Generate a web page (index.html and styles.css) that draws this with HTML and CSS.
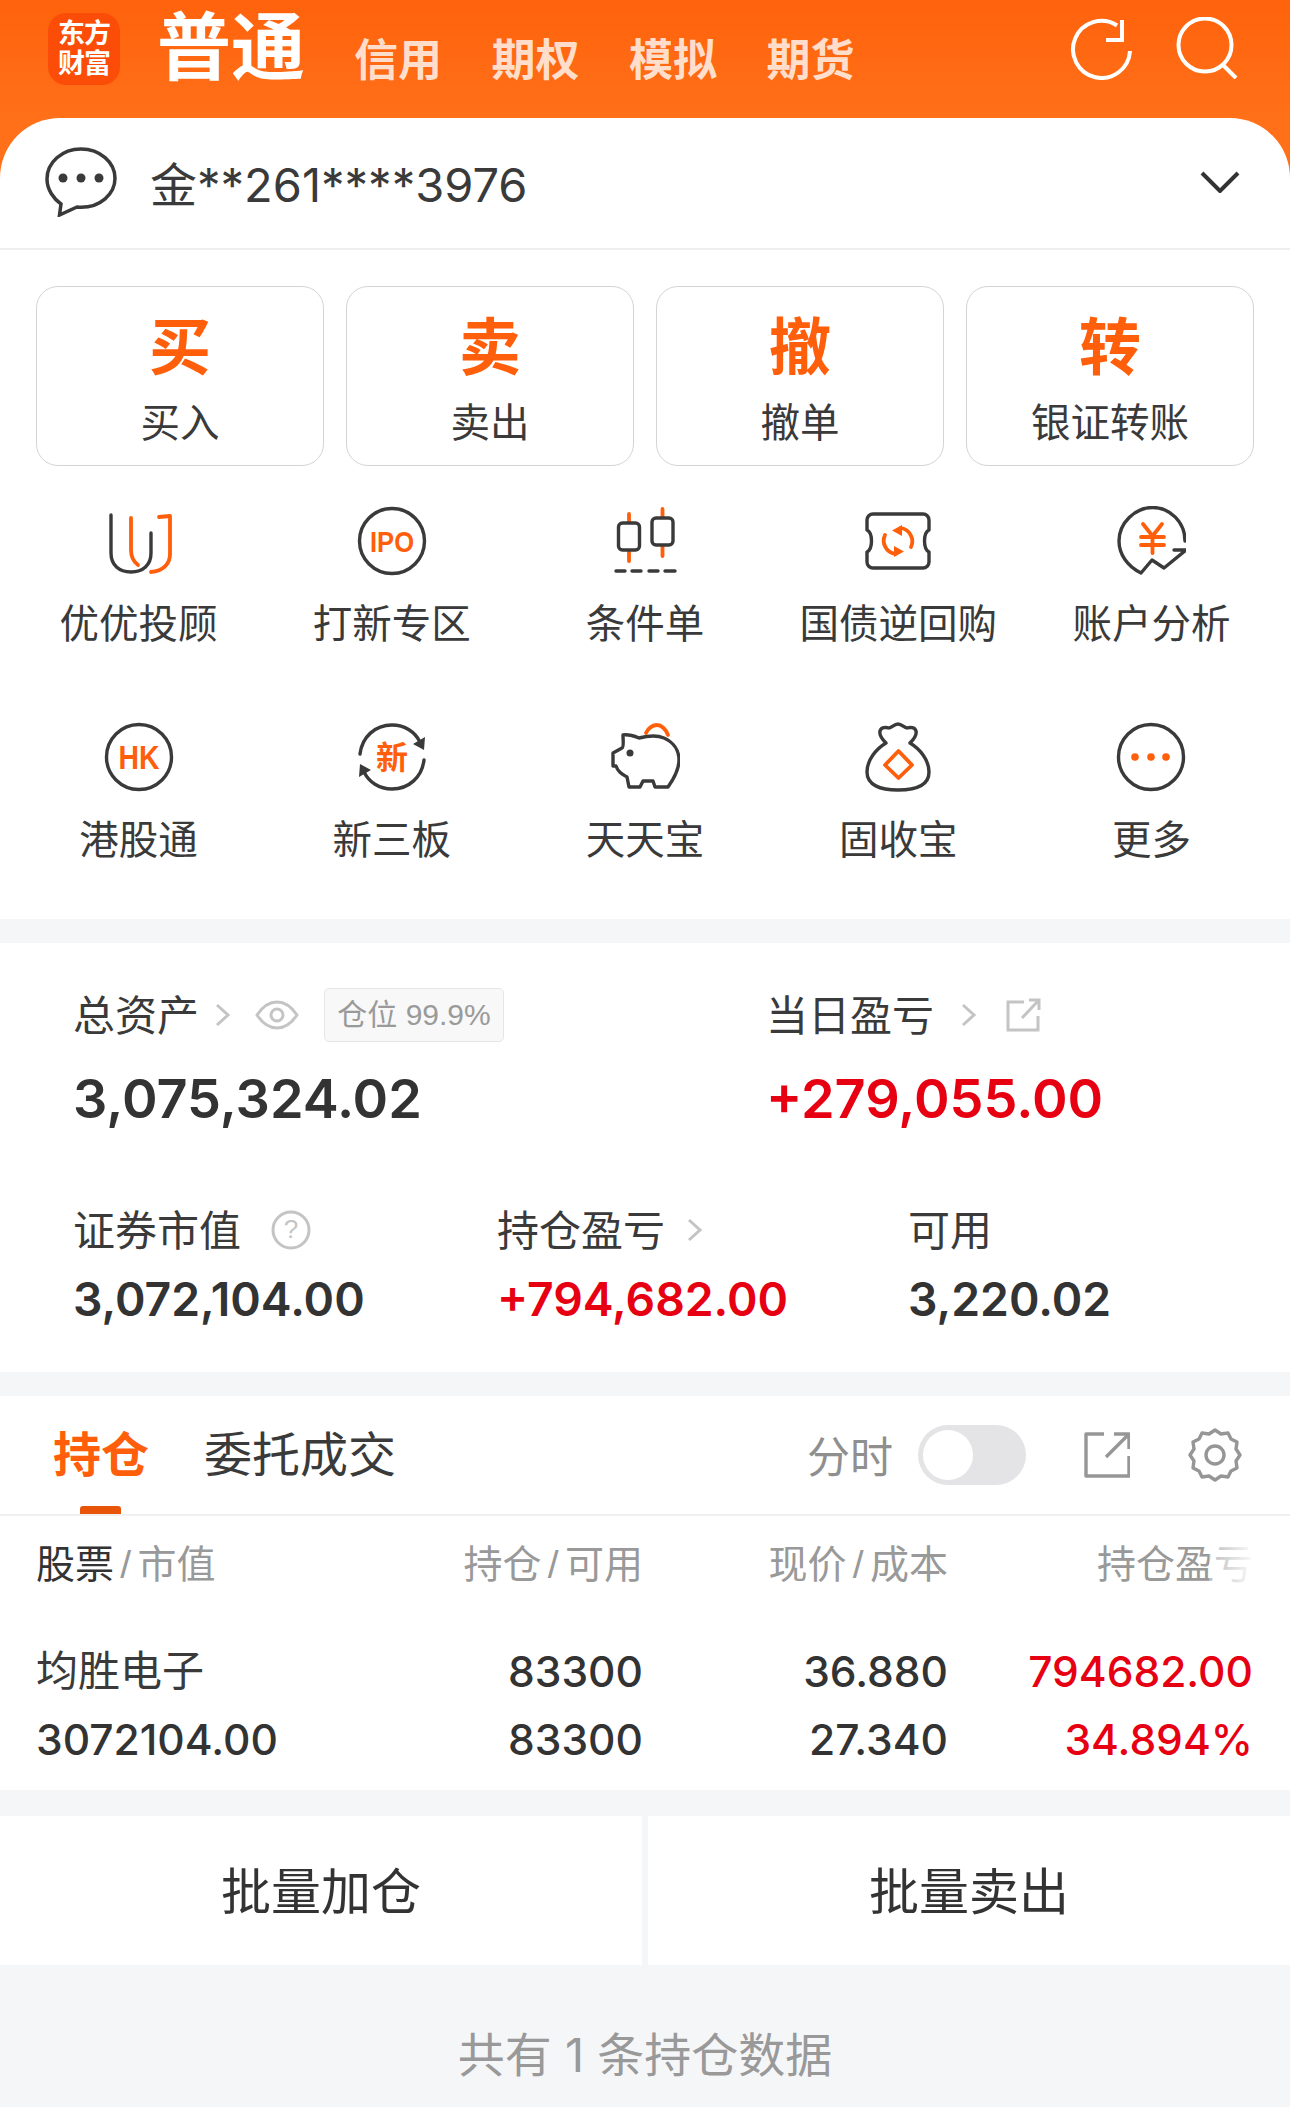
FILE: index.html
```html
<!DOCTYPE html>
<html lang="zh-CN">
<head>
<meta charset="utf-8">
<title>普通</title>
<link rel="stylesheet" href="styles.css">
</head>
<body>
<div class="top">
  <header class="header">
    <div class="logo"><span>东方</span><span>财富</span></div>
    <div class="title">普通</div>
    <nav class="nav"><span>信用</span><span>期权</span><span>模拟</span><span>期货</span></nav>
    <svg class="ic-refresh" viewBox="0 0 62 62"><path class="w" d="M60 33a28.500 28.500 0 1 1-13-25.500M52 2v20H36"/></svg>
    <svg class="ic-search" viewBox="0 0 62 62"><circle class="w" cx="29" cy="28" r="26.500"/><path class="w" d="M47 48l13 13"/></svg>
  </header>
  <div class="account">
    <svg class="ic-bubble" viewBox="0 0 72 70"><path class="bub" d="M36 2C17 2 2 15.500 2 32c0 11 7 20 14 25l-1.500 11L32 60c1.500.2 3 .3 4 .3 19 0 34-13 34-29S55 2 36 2z"/><circle class="dot" cx="18" cy="31" r="4.500"/><circle class="dot" cx="36" cy="31" r="4.500"/><circle class="dot" cx="54" cy="31" r="4.500"/></svg>
    <span class="acct-name">金**261****3976</span>
    <svg class="ic-chev" viewBox="0 0 40 22"><path class="chev" d="M2 2l18 18L38 2"/></svg>
  </div>
</div>

<section class="actions">
  <div class="act"><b>买</b><span>买入</span></div>
  <div class="act"><b>卖</b><span>卖出</span></div>
  <div class="act"><b>撤</b><span>撤单</span></div>
  <div class="act"><b>转</b><span>银证转账</span></div>
</section>

<section class="menu">
  <div class="item">
    <svg viewBox="0 0 70 70"><path class="d" d="M7 9v38c0 12 8 19 20 19s20-7 20-19V27"/><path class="o" d="M27 12v32c0 7 3 12 7 15"/><path class="o" d="M55 11l11-1v38c0 10-7 17-19 18"/></svg>
    <span>优优投顾</span>
  </div>
  <div class="item">
    <svg viewBox="0 0 70 70"><circle class="d" cx="35" cy="35" r="32.500"/><text class="ot ipo" x="35" y="46" textLength="44" lengthAdjust="spacingAndGlyphs">IPO</text></svg>
    <span>打新专区</span>
  </div>
  <div class="item">
    <svg viewBox="0 0 70 70"><path class="o" d="M19 8v47M52.500 3v47"/><rect class="dw" x="8.500" y="17" width="21" height="27" rx="4"/><rect class="dw" x="42" y="12" width="21" height="27" rx="4"/><path class="d" d="M6 65h9M22 65h9M39 65h9M55 65h10"/></svg>
    <span>条件单</span>
  </div>
  <div class="item">
    <svg viewBox="0 0 70 70"><path class="d" d="M10 8h50a6 6 0 0 1 6 6v10c-6 3-6 19 0 22v10a6 6 0 0 1-6 6H10a6 6 0 0 1-6-6V46c6-3 6-19 0-22V14a6 6 0 0 1 6-6z"/><path class="o" d="M38 22a13.500 13.500 0 0 1 10 19M32 48a13.500 13.500 0 0 1-10-19"/><path class="of" d="M39 19v11l-10-5.500zM31 40v11l10-5.500z"/></svg>
    <span>国债逆回购</span>
  </div>
  <div class="item">
    <svg viewBox="0 0 70 70"><path class="d" d="M69 35C69 16 54 1.500 36.500 1.500S3 17 3 35c0 13 8 25 22 32l11-13 12 8 22-18H58"/><path class="o" d="M27 18l9.500 12 9.500-12M25 31h23M25 39h23M36.500 30v17"/></svg>
    <span>账户分析</span>
  </div>
  <div class="item">
    <svg viewBox="0 0 70 70"><circle class="d" cx="35" cy="35" r="32.500"/><text class="ot hk" x="35" y="47" textLength="41" lengthAdjust="spacingAndGlyphs">HK</text></svg>
    <span>港股通</span>
  </div>
  <div class="item">
    <svg viewBox="0 0 70 70"><path class="d" d="M3 32C5 15 18 3 35 3c13 0 23 7 28 17M67 38c-2 17-15 29-32 29-13 0-23-7-28-17"/><path class="df" d="M68 15l-1 13-11-6zM2 55l1-13 11 6z"/><text class="ot xin" x="35" y="47">新</text></svg>
    <span>新三板</span>
  </div>
  <div class="item">
    <svg viewBox="0 0 70 70"><path class="d" d="M13 13c6-1 11 1 16 3 8-2 18-3 25 0 9 4 15 12 15 22 0 11-6 20-11 27H45l-2-6H33l-3 6H19l-2-10C12 52 8 50 6 44H3V31l9-5c2-1 1-8 1-13z"/><circle class="dot" cx="20" cy="31" r="3.500"/><path class="o" d="M36 11c2-5 7-8 11-8s9 4 11 10"/></svg>
    <span>天天宝</span>
  </div>
  <div class="item">
    <svg viewBox="0 0 70 70"><path class="d" d="M35 2c4 0 6 4 9 4 3-1 8-1 9 3 1 4-3 9-6 12 10 6 19 17 19 29 0 13-13 18-31 18S4 63 4 50c0-12 9-23 19-29-3-3-7-8-6-12 1-4 6-4 9-3 3 0 5-4 9-4z"/><path class="o" d="M35.500 29L49 43 35.500 56 22 43z"/></svg>
    <span>固收宝</span>
  </div>
  <div class="item">
    <svg viewBox="0 0 70 70"><circle class="d" cx="35" cy="35" r="32.500"/><circle class="of" cx="19" cy="35" r="3.800"/><circle class="of" cx="35" cy="35" r="3.800"/><circle class="of" cx="50" cy="35" r="3.800"/></svg>
    <span>更多</span>
  </div>
</section>

<section class="assets">
  <div class="row-main">
    <div>
      <div class="label"><span>总资产</span>
        <svg class="ic-gt g1" viewBox="0 0 16 24"><path class="g" d="M2 2l11 10L2 22"/></svg>
        <svg class="ic-eye" viewBox="0 0 44 30"><path class="g" d="M2 15C8 6 14 2 22 2s14 4 20 13c-6 9-12 13-20 13S8 24 2 15z"/><circle class="g" cx="22" cy="15" r="6"/></svg>
        <span class="badge">仓位 99.9%</span>
      </div>
      <div class="big">3,075,324.02</div>
    </div>
    <div>
      <div class="label"><span>当日盈亏</span>
        <svg class="ic-gt g2" viewBox="0 0 16 24"><path class="g" d="M2 2l11 10L2 22"/></svg>
        <svg class="ic-out" viewBox="0 0 36 34"><path class="g" d="M18 4H2v28h30V18M16 20L32 3M23 2h10v10"/></svg>
      </div>
      <div class="big red">+279,055.00</div>
    </div>
  </div>
  <div class="row-sub">
    <div>
      <div class="label"><span>证券市值</span>
        <svg class="ic-q" viewBox="0 0 40 40"><circle class="g" cx="20" cy="20" r="18"/><text class="qt" x="20" y="28">?</text></svg>
      </div>
      <div class="mid">3,072,104.00</div>
    </div>
    <div>
      <div class="label"><span>持仓盈亏</span>
        <svg class="ic-gt g3" viewBox="0 0 16 24"><path class="g" d="M2 2l11 10L2 22"/></svg>
      </div>
      <div class="mid red">+794,682.00</div>
    </div>
    <div>
      <div class="label"><span>可用</span></div>
      <div class="mid">3,220.02</div>
    </div>
  </div>
</section>

<section class="holdings">
  <div class="tabs">
    <span class="tab active">持仓</span>
    <span class="tab">委托成交</span>
    <span class="fs">分时</span>
    <span class="toggle"><i></i></span>
    <svg class="ic-share" viewBox="0 0 46 46"><path class="gs" d="M20 2H2v42h43V24M22 25L44 3M30 2h15v15"/></svg>
    <svg class="ic-gear" viewBox="0 0 54 54"><path class="gs" d="M27 2l6 4 7-1 3 6 6 3-1 7 4 6-4 6 1 7-6 3-3 6-7-1-6 4-6-4-7 1-3-6-6-3 1-7-4-6 4-6-1-7 6-3 3-6 7 1z"/><circle class="gs" cx="27" cy="27" r="9"/></svg>
  </div>
  <div class="table">
    <div class="th"><span class="dark">股票</span> / 市值</div>
    <div class="th r">持仓 / 可用</div>
    <div class="th r">现价 / 成本</div>
    <div class="th r fade">持仓盈亏</div>
    <div class="td name">均胜电子</div>
    <div class="td r">83300</div>
    <div class="td r">36.880</div>
    <div class="td r red">794682.00</div>
    <div class="td">3072104.00</div>
    <div class="td r">83300</div>
    <div class="td r">27.340</div>
    <div class="td r red">34.894%</div>
  </div>
</section>

<section class="batch">
  <div>批量加仓</div>
  <div>批量卖出</div>
</section>

<footer class="foot">共有 1 条持仓数据</footer>
</body>
</html>
```
FILE: styles.css
```css
* { box-sizing: border-box; }
html, body { margin: 0; padding: 0; }
body {
  width: 1290px;
  height: 2107px;
  overflow: hidden;
  background: #f5f6f8;
  color: #333;
  font-family: "Liberation Sans", "Noto Sans CJK SC", sans-serif;
}
svg { display: block; flex: none; }

/* header */
.top { background: linear-gradient(#ff620c, #ff7019 118px, #ff7019); }
.header { height: 118px; display: flex; align-items: flex-start; position: relative; }
.logo {
  width: 72px; height: 72px; margin: 13px 0 0 48px; border-radius: 18px;
  background: #fb4d08; color: #fff; font-weight: 700; font-size: 27px; line-height: 30px;
  display: flex; flex-direction: column; align-items: center; justify-content: center;
}
.logo span { display: block; letter-spacing: -1px; }
.title { margin: -4px 0 0 37px; font-size: 74px; line-height: 106px; font-weight: 700; color: #fff; }
.nav { display: flex; gap: 49.5px; margin: 29px 0 0 49px; color: rgba(255,255,255,.78); font-size: 44px; line-height: 64px; font-weight: 700; }
.ic-refresh { width: 62px; height: 62px; margin: 18px 0 0 215px; }
.ic-search { width: 62px; height: 62px; margin: 17px 0 0 44px; }
.w { fill: none; stroke: #fff; stroke-width: 4; }

.account {
  height: 132px; background: #fff; border-radius: 60px 60px 0 0; border-bottom: 2px solid #eee;
  display: flex; align-items: center; padding: 0 50px 0 45px;
}
.ic-bubble { width: 72px; height: 70px; margin-top: -2px; }
.bub { fill: none; stroke: #3a3a3a; stroke-width: 3.5; }
.dot { fill: #3a3a3a; }
.acct-name { margin: 4px 0 0 33px; font-family: Inter, "Noto Sans CJK SC", sans-serif; font-weight: 400; font-size: 47px; line-height: 70px; color: #3a3a3a; }
.ic-chev { width: 40px; height: 22px; margin-left: auto; margin-top: -2px; }
.chev { fill: none; stroke: #333; stroke-width: 4; }

/* action buttons */
.actions { background: #fff; padding: 36px 36px 0; display: grid; grid-template-columns: repeat(4, 1fr); gap: 22px; }
.act {
  height: 180px; border: 1.5px solid #d4d4d4; border-radius: 22px;
  display: flex; flex-direction: column; align-items: center; justify-content: flex-start;
}
.act b { margin-top: 22px; font-size: 62px; line-height: 80px; color: #ff5e0a; }
.act span { margin-top: 8px; font-size: 39.500px; line-height: 52px; color: #3a3a3a; }

/* menu grid */
.menu { background: #fff; padding: 40px 12px 54px; display: grid; grid-template-columns: repeat(5, 1fr); row-gap: 0; }
.item { height: 216px; display: flex; flex-direction: column; align-items: center; }
.item:nth-child(n+6) { height: 143px; }
.item svg { width: 70px; height: 70px; }
.item span { margin-top: 23px; font-size: 39.500px; line-height: 50px; color: #3a3a3a; }
.d, .dw { fill: none; stroke: #3a3a3a; stroke-width: 3.4; stroke-linecap: round; stroke-linejoin: round; }
.dw { fill: #fff; }
.df { fill: #3a3a3a; }
.o { fill: none; stroke: #ff5e0a; stroke-width: 3.8; stroke-linecap: round; stroke-linejoin: round; }
.of { fill: #ff5e0a; }
.ot { fill: #ff5e0a; font-weight: 700; text-anchor: middle; }
.ipo { font-size: 30px; }
.hk { font-size: 34px; }
.xin { font-size: 32px; }

/* assets */
.assets { margin-top: 24px; background: #fff; height: 429px; padding: 42px 0 0 73px; }
.row-main { display: grid; grid-template-columns: 693px 1fr; }
.row-sub { margin-top: 66px; display: grid; grid-template-columns: 424px 411px 1fr; }
.label { display: flex; align-items: center; height: 54px; font-size: 42px; color: #3a3a3a; }
.label svg, .badge { margin-top: 6px; }
.big { margin-top: 25px; font-family: Inter, sans-serif; font-size: 54px; line-height: 70px; font-weight: 600; }
.mid { margin-top: 15px; font-family: Inter, sans-serif; font-size: 46.300px; line-height: 60px; font-weight: 600; }
.red { color: #e60012; }
.g { fill: none; stroke: #c4c4c4; stroke-width: 3; }
.ic-gt { width: 16px; height: 24px; }
.g1 { margin-left: 16px; }
.g2 { margin-left: 27px; }
.g3 { margin-left: 22px; }
.label .ic-eye { width: 44px; height: 30px; margin-left: 24px; }
.badge {
  margin-left: 25px; width: 180px; height: 54px; border: 1.5px solid #e6e6e6; border-radius: 5px; background: #f8f8f8;
  font-size: 30px; line-height: 52px; text-align: center; color: #9a9a9a; white-space: nowrap;
}
.ic-out { width: 36px; height: 34px; margin-left: 29px; }
.ic-q { width: 40px; height: 40px; margin-left: 30px; }
.qt { font-size: 26px; fill: #c4c4c4; text-anchor: middle; }

/* holdings */
.holdings { margin-top: 24px; background: #fff; height: 394px; }
.tabs { height: 120px; border-bottom: 2px solid #f0f0f0; display: flex; align-items: center; padding: 0 48px 0 53px; }
.tab { font-size: 48px; line-height: 64px; color: #3a3a3a; margin-right: 55px; margin-top: 1px; }
.tab.active { color: #ff5e0a; font-weight: 700; position: relative; }
.tab.active::after { content: ""; position: absolute; left: 27px; bottom: -26px; width: 41px; height: 8px; background: #e85508; border-radius: 3px 3px 0 0; }
.fs { margin-left: auto; margin-top: -3px; font-size: 43px; color: #8f8f8f; }
.toggle { margin-left: 25px; width: 108px; height: 60px; border-radius: 30px; background: #e4e4e6; display: flex; align-items: center; padding-left: 5px; }
.toggle i { display: block; width: 50px; height: 50px; border-radius: 50%; background: #fff; }
.ic-share { width: 46px; height: 46px; margin-left: 58px; }
.ic-gear { width: 54px; height: 54px; margin-left: 58px; }
.gs { fill: none; stroke: #969696; stroke-width: 3.4; stroke-linejoin: round; }

.table { display: grid; grid-template-columns: 343px 264px 305px 305px; padding: 0 35px 0 36px; grid-template-rows: 96px 68px 68px; }
.th { font-size: 39px; line-height: 98px; color: #999; word-spacing: -4.500px; }
.th .dark { color: #333; }
.td { position: relative; top: 26px; font-family: Inter, sans-serif; font-size: 42.500px; line-height: 68px; font-weight: 500; }
.td.name { font-family: "Liberation Sans", "Noto Sans CJK SC", sans-serif; font-size: 42px; font-weight: 400; color: #3a3a3a; }
.r { text-align: right; }
.fade { position: relative; }
.fade::after { content: ""; position: absolute; top: 0; bottom: 0; right: 0; width: 44px; background: linear-gradient(to right, rgba(255,255,255,.35), rgba(255,255,255,.95)); }

/* batch buttons */
.batch { margin-top: 26px; height: 149px; display: grid; grid-template-columns: 642px 642px; gap: 6px; }
.batch div { background: #fff; padding-top: 5px; font-size: 50px; line-height: 144px; text-align: center; color: #333; }

.foot { padding-top: 60px; font-family: Inter, "Noto Sans CJK SC", sans-serif; font-size: 47px; line-height: 60px; text-align: center; color: #999; }
```
